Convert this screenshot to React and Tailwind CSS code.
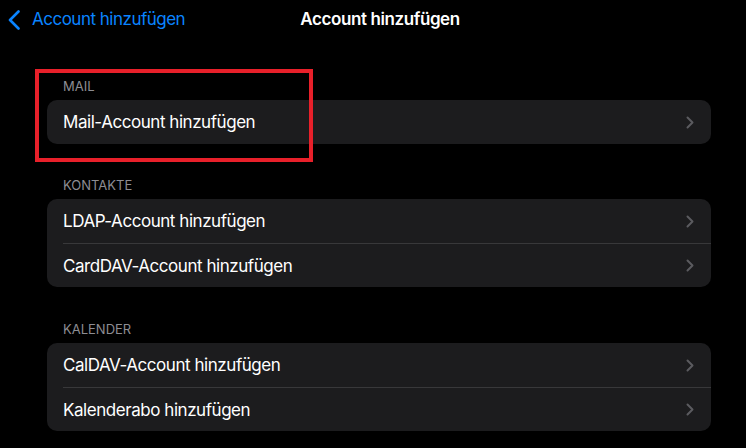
const sections = [
  { title: 'MAIL', items: ['Mail-Account hinzufügen'] },
  { title: 'KONTAKTE', items: ['LDAP-Account hinzufügen', 'CardDAV-Account hinzufügen'] },
  { title: 'KALENDER', items: ['CalDAV-Account hinzufügen', 'Kalenderabo hinzufügen'] },
];

function Chevron() {
  return (
    <svg width="8" height="13" viewBox="0 0 8 13" fill="none" className="shrink-0">
      <path d="M1.5 1.5l5 5-5 5" stroke="#5b5b5f" strokeWidth="2" strokeLinecap="round" strokeLinejoin="round" />
    </svg>
  );
}

function BackChevron() {
  return (
    <svg width="13" height="20" viewBox="0 0 13 20" fill="none" className="shrink-0">
      <path d="M10.5 1.5L2 10l8.5 8.5" stroke="#0a84ff" strokeWidth="2.6" strokeLinecap="round" strokeLinejoin="round" />
    </svg>
  );
}

export default function App() {
  return (
    <div className="w-[746px] h-[448px] bg-black overflow-hidden relative font-['Inter',sans-serif] text-white">
      <div className="h-[39px] flex items-center relative">
        <div className="flex items-center pl-[8px] text-[#0a84ff]">
          <BackChevron />
          <span className="ml-[11px] text-[17px] tracking-[-0.5px]">Account hinzufügen</span>
        </div>
        <div className="absolute left-0 right-0 top-0 h-[39px] flex items-center justify-center pl-[14px] pointer-events-none">
          <span className="text-[17px] font-semibold tracking-[-0.4px]">Account hinzufügen</span>
        </div>
      </div>

      <div className="pl-[47px] pr-[35px] pt-[39px] flex flex-col gap-[33px]">
        {sections.map((section, s) => (
          <div key={section.title} className={s === 2 ? 'pt-px' : ''}>
            <div className="px-4 h-[16px] leading-[16px] text-[13px] text-[#8d8d93] mb-[6px]">{section.title}</div>
            <div className="bg-[#1c1c1e] rounded-[10px] overflow-hidden">
              {section.items.map((item, i) => (
                <div key={item} className="pl-4 relative">
                  {i > 0 && <div className="h-px bg-[#38383a]" />}
                  <div className={`${i > 0 ? 'h-[43px]' : 'h-[44px]'} flex items-center justify-between pr-[17px]`}>
                    <span className="pt-[2px] text-[17px] tracking-[-0.45px]">{item}</span>
                    <Chevron />
                  </div>
                </div>
              ))}
            </div>
          </div>
        ))}
      </div>

      <div className="absolute left-[35px] top-[69px] w-[278px] h-[93px] border-4 border-[#e8202a]" />
    </div>
  );
}
